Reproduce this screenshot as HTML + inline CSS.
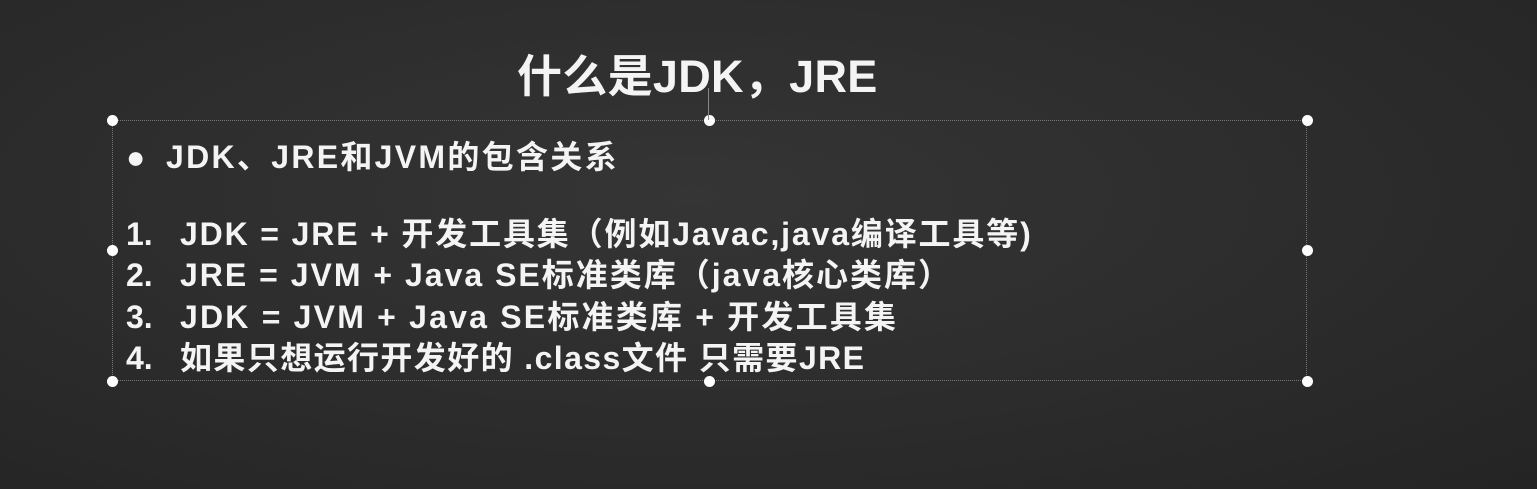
<!DOCTYPE html>
<html><head><meta charset="utf-8"><style>
html,body{margin:0;padding:0;}
body{width:1537px;height:489px;overflow:hidden;position:relative;
background:radial-gradient(ellipse at 45% 40%,#353535 0%,#2c2c2c 55%,#242424 100%);
font-family:"Liberation Sans","Noto Sans CJK SC",sans-serif;color:#f4f4f4;font-weight:bold;}
.t{position:absolute;white-space:nowrap;}
.box{position:absolute;left:112px;top:120px;width:1195px;height:261px;border:1px dotted #777;box-sizing:border-box;}
.h{position:absolute;width:11px;height:11px;border-radius:50%;background:#fff;margin:-5.5px 0 0 -5.5px;}
.n{display:inline-block;width:54px;letter-spacing:0}
.l{font-size:32px;letter-spacing:2px;left:126px}
</style></head><body>
<div class="t" style="left:517px;top:40px;font-size:45px;letter-spacing:0.3px">什么是JDK，JRE</div>
<div class="box"></div>
<div class="h" style="left:112px;top:120px"></div>
<div class="h" style="left:709px;top:120px"></div>
<div class="h" style="left:1307px;top:120px"></div>
<div class="h" style="left:112px;top:250px"></div>
<div class="h" style="left:1307px;top:250px"></div>
<div class="h" style="left:112px;top:381px"></div>
<div class="h" style="left:709px;top:381px"></div>
<div class="h" style="left:1307px;top:381px"></div>
<div style="position:absolute;left:708px;top:88px;width:1px;height:32px;background:#888"></div>
<div class="t" style="left:126px;top:132px;font-size:32px;letter-spacing:2.3px"><span style="display:inline-block;width:40px;letter-spacing:0">●</span>JDK、JRE和JVM的包含关系</div>
<div class="t l" style="top:209px;letter-spacing:1.85px"><span class="n">1.</span>JDK = JRE + 开发工具集（例如Javac,java编译工具等)</div>
<div class="t l" style="top:250px"><span class="n">2.</span>JRE = JVM + Java SE标准类库（java核心类库）</div>
<div class="t l" style="top:292px;letter-spacing:2.2px"><span class="n">3.</span>JDK = JVM + Java SE标准类库 + 开发工具集</div>
<div class="t l" style="top:333px;letter-spacing:1.4px"><span class="n">4.</span>如果只想运行开发好的 .class文件 只需要JRE</div>
</body></html>
